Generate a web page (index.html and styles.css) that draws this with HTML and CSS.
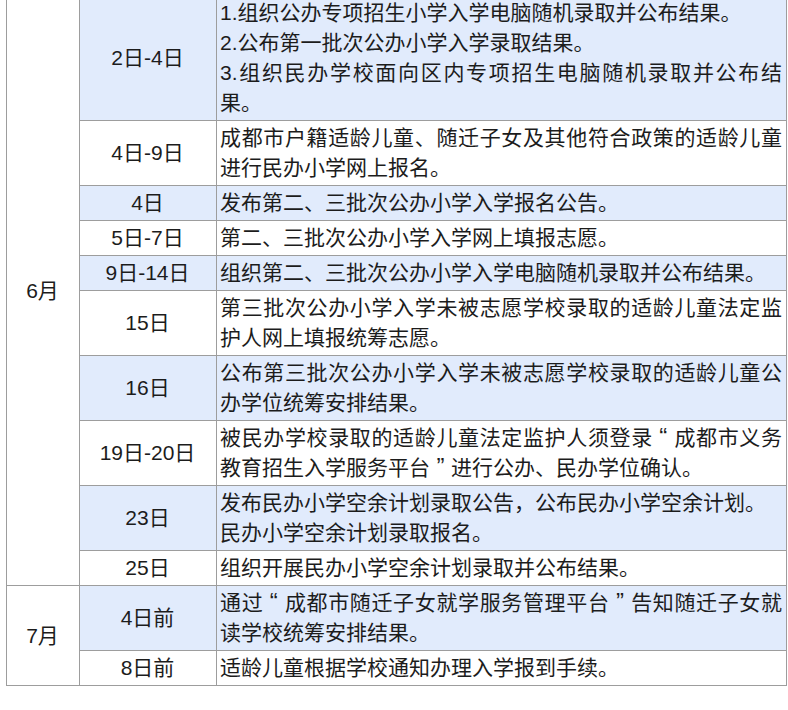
FILE: index.html
```html
<!DOCTYPE html>
<html lang="zh-CN">
<head>
<meta charset="utf-8">
<title>成都市小学入学时间安排</title>
<link rel="stylesheet" href="styles.css">
</head>
<body>
<table class="schedule">
  <colgroup>
    <col class="c-month">
    <col class="c-date">
    <col class="c-desc">
  </colgroup>
  <tbody>
    <tr class="alt">
      <td class="month month-june" rowspan="10">6月</td>
      <td class="date">2日-4日</td>
      <td class="desc">1.组织公办专项招生小学入学电脑随机录取并公布结果。<br>2.公布第一批次公办小学入学录取结果。<br>3.组织民办学校面向区内专项招生电脑随机录取并公布结果。</td>
    </tr>
    <tr>
      <td class="date">4日-9日</td>
      <td class="desc">成都市户籍适龄儿童、随迁子女及其他符合政策的适龄儿童进行民办小学网上报名。</td>
    </tr>
    <tr class="alt">
      <td class="date">4日</td>
      <td class="desc">发布第二、三批次公办小学入学报名公告。</td>
    </tr>
    <tr>
      <td class="date">5日-7日</td>
      <td class="desc">第二、三批次公办小学入学网上填报志愿。</td>
    </tr>
    <tr class="alt">
      <td class="date">9日-14日</td>
      <td class="desc">组织第二、三批次公办小学入学电脑随机录取并公布结果。</td>
    </tr>
    <tr>
      <td class="date">15日</td>
      <td class="desc">第三批次公办小学入学未被志愿学校录取的适龄儿童法定监护人网上填报统筹志愿。</td>
    </tr>
    <tr class="alt">
      <td class="date">16日</td>
      <td class="desc">公布第三批次公办小学入学未被志愿学校录取的适龄儿童公办学位统筹安排结果。</td>
    </tr>
    <tr>
      <td class="date">19日-20日</td>
      <td class="desc">被民办学校录取的适龄儿童法定监护人须登录<span class="q">“</span>成都市义务教育招生入学服务平台<span class="q">”</span>进行公办、民办学位确认。</td>
    </tr>
    <tr class="alt">
      <td class="date">23日</td>
      <td class="desc">发布民办小学空余计划录取公告，公布民办小学空余计划。<br>民办小学空余计划录取报名。</td>
    </tr>
    <tr>
      <td class="date">25日</td>
      <td class="desc">组织开展民办小学空余计划录取并公布结果。</td>
    </tr>
    <tr class="alt">
      <td class="month" rowspan="2">7月</td>
      <td class="date">4日前</td>
      <td class="desc">通过<span class="q">“</span>成都市随迁子女就学服务管理平台<span class="q">”</span>告知随迁子女就读学校统筹安排结果。</td>
    </tr>
    <tr>
      <td class="date">8日前</td>
      <td class="desc">适龄儿童根据学校通知办理入学报到手续。</td>
    </tr>
  </tbody>
</table>
</body>
</html>
```

FILE: styles.css
```css
html, body {
  margin: 0;
  padding: 0;
  background: #ffffff;
}

body {
  font-family: "Liberation Sans", "Noto Sans CJK SC", sans-serif;
  font-size: 21px;
  color: #1c1c1c;
}

.schedule {
  border-collapse: collapse;
  table-layout: fixed;
  width: 780px;
  margin: -5px 0 0 6px;
}

.c-month { width: 73px; }
.c-date { width: 137px; }
.c-desc { width: 570px; }

.schedule td {
  border: 1px solid #9d9d9d;
  line-height: 30px;
  padding: 2px 4px 2px 3px;
  vertical-align: middle;
}

.schedule .alt td:not(.month) {
  background: #e1ebfc;
}

.month {
  text-align: center;
  background: #ffffff;
}

.month-june {
  padding-top: 36px;
}

.date {
  text-align: center;
}

.desc {
  text-align: justify;
}

.q {
  display: inline-block;
  width: 21px;
  text-align: center;
  font-size: 24px;
  line-height: 20px;
  font-family: "Liberation Sans", sans-serif;
}
```
